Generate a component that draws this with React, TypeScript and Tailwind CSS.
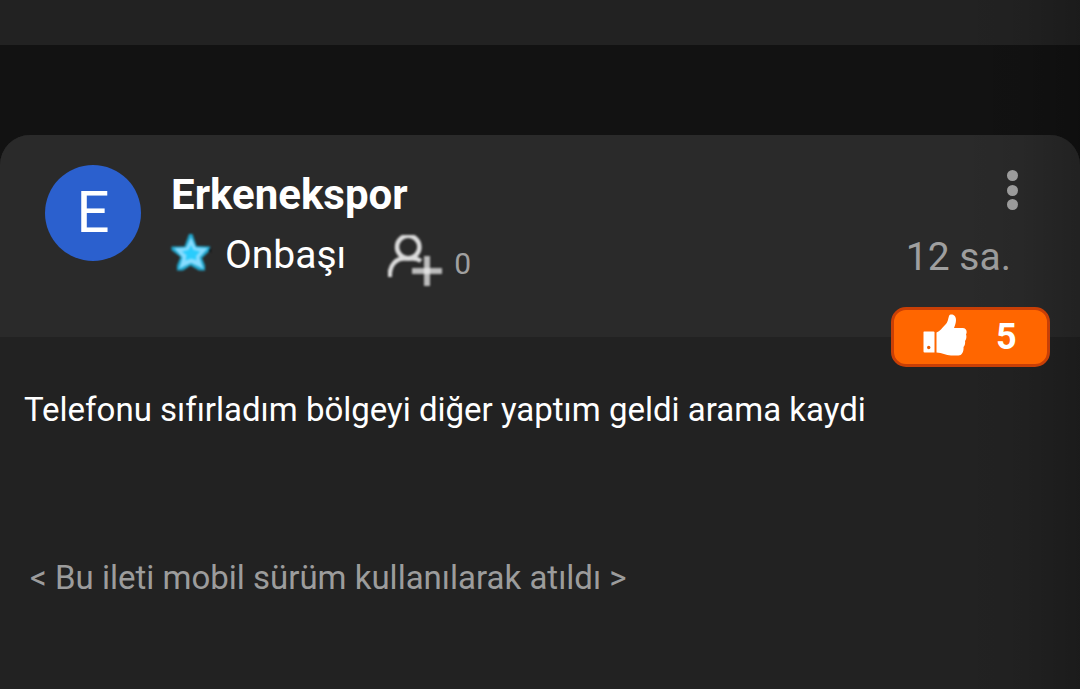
const post = {
    initial: 'E',
    author: 'Erkenekspor',
    rank: 'Onbaşı',
    followers: 0,
    time: '12 sa.',
    likes: 5,
    message: 'Telefonu sıfırladım bölgeyi diğer yaptım geldi arama kaydi',
    footer: '< Bu ileti mobil sürüm kullanılarak atıldı >'
};

const StarIcon = () => (
    <svg width="40" height="38" viewBox="0 0 40 38" className="shrink-0 blur-[0.9px]">
        <path d="M18 0H21.500L25.5 12L39 12.5V16.5L31 24L34 31.5V36.5H28L19.5 31.5L12 36.5H6V31.5L9.500 23L0.500 16V12.5H13.500Z" fill="#1fa6cd" />
        <path d="M20 3L24.8 13.500L37 14L28.5 23.5L32.500 35L20 29L8 35L11.500 23.5L3 14L15.2 13.500Z" fill="#86dcff" />
        <path d="M20 11L22.5 16L29 17.500L25 22L25.500 26L20 24.500L14.500 26.500L15.500 21L11 17.500L17.500 16Z" fill="#2accfc" />
        <path d="M38 15h2v3h-2z" fill="#080b0d" />
    </svg>
);

const FollowIcon = () => (
    <svg width="54" height="52" viewBox="0 0 54 52" fill="none" className="shrink-0 blur-[0.9px]">
        <circle cx="20.200" cy="12" r="11.200" stroke="#dcdcdc" strokeWidth="4.500" />
        <path d="M1.800 42V39C2.300 29 9 23.500 16 23.500H25C28 23.500 30 24 33 26" stroke="#dcdcdc" strokeWidth="4.500" />
        <path d="M39 21V51M24 36H54" stroke="#bcbcbc" strokeWidth="6" />
        <path d="M36 33h6v6h-6z" fill="#e0e0e0" />
    </svg>
);

const ThumbIcon = () => (
    <svg width="45" height="43" viewBox="0 0 45 43" className="shrink-0">
        <path d="M1 17.500H10.500Q11.500 17.500 11.500 18.500V38.500H1.500Q0.500 38.500 0.500 37.500V18.500Q0.500 17.500 1 17.500Z" fill="#fff" />
        <circle cx="5.700" cy="33.500" r="1.700" fill="#e85b00" />
        <path d="M13.500 18.500C17 17.500 19 14 22 11C25 8.500 25 5 26 2C27 -0.500 33 0 33 6C33 9 32 11 31 14H39.500C43.500 14 44.500 18 43 20.500C44 23 43 26 42 27C42.500 30 41.500 32 40.500 33C41 37 39 41.500 35.500 41.500H28C23 41.500 19 38.500 13.500 38.500Z" fill="#fff" />
    </svg>
);

const PostHeader = () => (
    <header className="relative flex h-[202px] items-start rounded-t-[30px] bg-[#2a2a2a] pt-[30px] pl-[45px]">
        <div className="flex size-24 shrink-0 items-center justify-center rounded-full bg-[#2b60ce] pb-[2px] text-[58px] leading-none">
            {post.initial}
        </div>
        <div className="ml-[27px] flex flex-col pt-[6px]">
            <h2 className="pl-[3px] text-[42px] leading-[48px] font-bold">{post.author}</h2>
            <div className="mt-[12px] flex items-start">
                <div className="pt-[3px] pl-[3px]"><StarIcon /></div>
                <span className="ml-[14px] text-[39px] leading-[48px]">{post.rank}</span>
                <div className="ml-[42px] pt-[4px]"><FollowIcon /></div>
                <span className="ml-[12px] pt-[17px] text-[30px] leading-[32px] text-[#a0a0a0]">{post.followers}</span>
            </div>
        </div>
        <div className="mr-[62px] ml-auto flex flex-col items-end pt-[5px]">
            <div className="flex flex-col gap-[3.5px]">
                <span className="size-[11px] rounded-full bg-[#a2a2a2]" />
                <span className="size-[11px] rounded-full bg-[#a2a2a2]" />
                <span className="size-[11px] rounded-full bg-[#a2a2a2]" />
            </div>
            <span className="mt-[23px] mr-[7px] text-[39px] leading-[48px] text-[#9f9f9f]">{post.time}</span>
        </div>
        <div className="absolute right-[30px] -bottom-[30px] z-10 flex h-[60px] w-[159px] items-center rounded-[15px] border-[3px] border-[#c83f06] bg-[#ff6600] pl-[29px]">
            <div className="-mt-[4px]"><ThumbIcon /></div>
            <span className="ml-[28px] text-[36px] leading-[54px] font-bold">{post.likes}</span>
        </div>
    </header>
);

const App = () => (
    <main className="relative h-[689px] w-[1080px] overflow-hidden bg-[#121212] font-['Roboto',sans-serif] whitespace-nowrap text-white">
        <div className="mb-[90px] h-[45px] bg-[#222222]" />
        <article className="h-[554px] rounded-t-[30px] bg-[#222222]">
            <PostHeader />
            <p className="pt-[53px] pl-[24px] text-[33px] leading-[40px]">{post.message}</p>
            <p className="pt-[128px] pl-[30px] text-[33px] leading-[40px] text-[#9c9c9c]">{post.footer}</p>
        </article>
        {/* edge shade */}
        <div className="pointer-events-none absolute inset-y-0 right-0 w-[120px] bg-linear-to-r from-transparent via-black/5 to-black/20" />
    </main>
);

export default App;
